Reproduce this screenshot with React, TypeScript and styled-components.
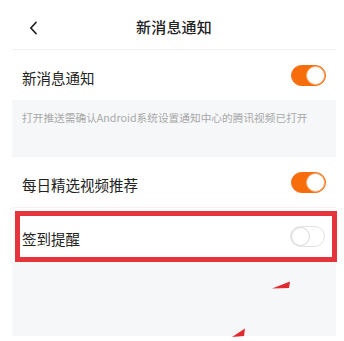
import * as React from 'react';
import styled, { createGlobalStyle } from 'styled-components';

const GlobalStyle = createGlobalStyle`
    html, body {
        margin: 0;
        padding: 0;
        background: #ffffff;
    }
    body {
        font-family: "Noto Sans CJK SC", "Noto Sans", sans-serif;
        color: #222222;
    }
`;

const Page = styled.div`
    position: relative;
    width: 344px;
    height: 341px;
    padding: 0 8px 0 12px;
    box-sizing: border-box;
    overflow: hidden;
`;

const Header = styled.div`
    height: 50px;
    display: flex;
    align-items: center;
    justify-content: center;
    position: relative;
    border-bottom: 1px solid #f1f1f1;
    box-sizing: border-box;
`;

const BackButton = styled.div`
    position: absolute;
    left: 16px;
    top: 21px;
    width: 12px;
    height: 14px;
    display: flex;
`;

const Title = styled.h1`
    margin: 0;
    font-size: 15px;
    font-weight: 500;
    color: #222;
    letter-spacing: 0.2px;
    padding-top: 4px;
`;

interface RowProps {
    height?: number;
}

const Row = styled.div<RowProps>`
    height: ${({ height }) => height ?? 50}px;
    display: flex;
    align-items: center;
    justify-content: space-between;
    padding: 0 10px 0 10px;
    box-sizing: border-box;
`;

const Label = styled.span`
    font-size: 14.5px;
    color: #222;
    padding-top: 4px;
`;

const Hint = styled.div`
    height: 57px;
    background: #f6f7f9;
    padding: 10px 10px 0;
    box-sizing: border-box;
    font-size: 10.7px;
    color: #a8a8a8;
    white-space: nowrap;
`;

const Divider = styled.div`
    height: 1px;
    background: #faf0f0;
`;

const Highlight = styled.div`
    margin: 3px -1px 0 3px;
    border: 5px solid #e5343b;
    height: 51px;
    box-sizing: border-box;
`;

const HighlightRow = styled(Row)`
    height: 41px;
    padding: 0 7px 0 2px;
`;

const Filler = styled.div`
    height: 74px;
    background: #f6f7f9;
`;

interface ToggleProps {
    on: boolean;
}

const Track = styled.div<ToggleProps>`
    width: 35px;
    height: 21px;
    border-radius: 11px;
    box-sizing: border-box;
    background: ${({ on }) => (on ? '#f76d0c' : '#ffffff')};
    border: 1px solid ${({ on }) => (on ? '#f76d0c' : '#e2e2e2')};
    position: relative;
    flex-shrink: 0;
`;

const Knob = styled.div<ToggleProps>`
    position: absolute;
    top: 0px;
    left: ${({ on }) => (on ? '14px' : '0px')};
    width: 19px;
    height: 19px;
    border-radius: 50%;
    background: #ffffff;
    box-sizing: border-box;
    border: 1px solid ${({ on }) => (on ? '#f7b27a' : '#d8d8d8')};
`;

const Toggle: React.FC<ToggleProps> = ({ on }) => (
    <Track on={on}>
        <Knob on={on} />
    </Track>
);

const Annotation = styled.svg`
    position: absolute;
    left: 0;
    top: 0;
    pointer-events: none;
`;

export default function App() {
    return (
        <>
            <GlobalStyle />
            <Page>
                <Header>
                    <BackButton>
                        <svg width="12" height="14" viewBox="0 0 12 14">
                            <path
                                d="M8 1.5 L2.8 7 L8 12.5"
                                fill="none"
                                stroke="#222"
                                strokeWidth="1.8"
                                strokeLinecap="round"
                                strokeLinejoin="round"
                            />
                        </svg>
                    </BackButton>
                    <Title>新消息通知</Title>
                </Header>
                <Row>
                    <Label>新消息通知</Label>
                    <Toggle on />
                </Row>
                <Hint>打开推送需确认Android系统设置通知中心的腾讯视频已打开</Hint>
                <Row>
                    <Label>每日精选视频推荐</Label>
                    <Toggle on />
                </Row>
                <Divider />
                <Highlight>
                    <HighlightRow>
                        <Label>签到提醒</Label>
                        <Toggle on={false} />
                    </HighlightRow>
                </Highlight>
                <Filler />
                <Annotation width="344" height="341" viewBox="0 0 344 341">
                    <polygon points="272,288.5 290,281.5 289,288" fill="#e02a30" />
                    <polygon points="232,337 245,328.5 244,336" fill="#e02a30" />
                </Annotation>
            </Page>
        </>
    );
}
